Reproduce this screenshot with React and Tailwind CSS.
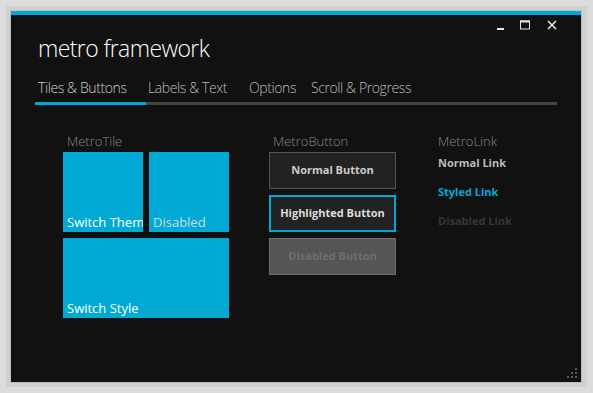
import React from 'react';

const font = { fontFamily: '"Open Sans", "Segoe UI", sans-serif' };

const WindowControls = () => (
  <div className="flex items-start justify-end pr-[24px] pt-[5px] h-[17px]">
    <svg width="8" height="10" viewBox="0 0 8 10" className="mt-[1px]">
      <rect x="0" y="7" width="7" height="2" fill="#e6e6e6" />
    </svg>
    <svg width="11" height="10" viewBox="0 0 11 10" className="ml-[15px]">
      <rect x="0.5" y="1" width="9" height="8" fill="none" stroke="#e6e6e6" strokeWidth="1" />
      <rect x="0" y="0.5" width="10" height="2" fill="#e6e6e6" />
    </svg>
    <svg width="10" height="10" viewBox="0 0 10 10" className="ml-[16px]">
      <path d="M1 1 L9 9 M9 1 L1 9" stroke="#e6e6e6" strokeWidth="1.6" />
    </svg>
  </div>
);

const tabs = [
  { label: 'Tiles & Buttons', cls: 'w-[111px] pl-[3px]', active: true },
  { label: 'Labels & Text', cls: 'w-[100px] pl-[2px]' },
  { label: 'Options', cls: 'w-[63px] pl-[3px]' },
  { label: 'Scroll & Progress', cls: 'pl-[2px]' },
];

const Tile = ({ label, className, textClass }) => (
  <div className={`bg-[#00aad4] overflow-hidden flex items-end ${className}`}>
    <span className={`pl-[4px] pb-[1px] text-[13px] leading-[18px] whitespace-nowrap ${textClass}`}>{label}</span>
  </div>
);

export default function App() {
  return (
    <div className="w-[593px] h-[393px] bg-[#dcdcdc] pl-[6px] pt-[6px]" style={font}>
      <div className="w-[581px] h-[381px] bg-[#d0d0d0] pl-[4px] pt-[4px]">
        <div className="relative w-[572px] h-[373px] border border-[#bdbdbd] bg-[#111111] flex flex-col">
          <div className="h-[4px] bg-[#00aad4] shrink-0" />
          <WindowControls />

          <div className="pl-[27px] text-[23px] leading-[32px] font-light tracking-[-0.6px] text-white">metro framework</div>

          <div className="ml-[24px] w-[522px] mt-[14px]">
            <div className="flex text-[14px] leading-[20px] font-light tracking-[-0.4px] text-[#bbbbbb]">
              {tabs.map((t) => (
                <div key={t.label} className={`${t.cls} whitespace-nowrap ${t.active ? 'text-[#cccccc]' : ''}`}>
                  {t.label}
                </div>
              ))}
            </div>
            <div className="flex h-[3px] mt-[4px]">
              <div className="w-[111px] bg-[#00aad4]" />
              <div className="flex-1 bg-[#444444]" />
            </div>
          </div>

          <div className="flex pl-[52px] mt-[27px]">
            <div className="w-[166px]">
              <div className="pl-[4px] text-[13px] leading-[18px] font-light text-[#8a8a8a] mb-[2px]">MetroTile</div>
              <div className="flex gap-[6px]">
                <Tile label="Switch Theme" className="w-[80px] h-[80px]" textClass="text-white" />
                <Tile label="Disabled" className="w-[80px] h-[80px]" textClass="text-[#cfd9dc]" />
              </div>
              <Tile label="Switch Style" className="w-[166px] h-[80px] mt-[6px]" textClass="text-white" />
            </div>

            <div className="w-[127px] ml-[40px]">
              <div className="pl-[4px] text-[13px] leading-[18px] font-light text-[#8a8a8a] mb-[2px]">MetroButton</div>
              <div className="flex flex-col gap-[6px]">
                <div className="h-[37px] bg-[#222222] border border-[#555555] flex items-center justify-center text-[11px] font-bold text-[#cccccc]">
                  Normal Button
                </div>
                <div className="h-[37px] bg-[#222222] border-2 border-[#00aad4] flex items-center justify-center text-[11px] font-bold text-[#dddddd]">
                  Highlighted Button
                </div>
                <div className="h-[37px] bg-[#555555] border border-[#6e6e6e] flex items-center justify-center text-[11px] font-bold text-[#6e6e6e]">
                  Disabled Button
                </div>
              </div>
            </div>

            <div className="ml-[42px]">
              <div className="text-[13px] leading-[18px] font-light text-[#8a8a8a]">MetroLink</div>
              <div className="mt-[5px] text-[11px] leading-[16px] font-bold text-[#bbbbbb]">Normal Link</div>
              <div className="mt-[13px] text-[11px] leading-[16px] font-bold text-[#00aad4]">Styled Link</div>
              <div className="mt-[13px] text-[11px] leading-[16px] font-bold text-[#363636]">Disabled Link</div>
            </div>
          </div>

          <div className="absolute right-[4px] bottom-[4px] grid grid-cols-3 gap-[2px]">
            {[0, 0, 1, 0, 1, 1, 1, 1, 1].map((on, i) => (
              <div key={i} className={`w-[2px] h-[2px] ${on ? 'bg-[#5a5a5a]' : ''}`} />
            ))}
          </div>
        </div>
      </div>
    </div>
  );
}
